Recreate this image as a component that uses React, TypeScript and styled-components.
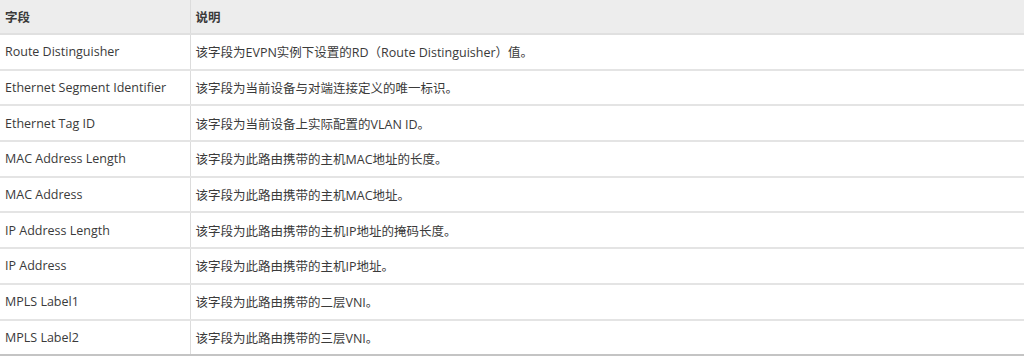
import styled, { createGlobalStyle } from 'styled-components';

const GlobalStyle = createGlobalStyle`
  html, body {
    margin: 0;
    padding: 0;
    background: #fff;
  }
`;

const Table = styled.table`
  width: 1024px;
  border-collapse: collapse;
  table-layout: fixed;
  font-family: 'Open Sans', 'Noto Sans CJK SC', sans-serif;
  font-size: 12.5px;
  color: #3a3a3a;
  border-bottom: 2px solid #c4c4c4;
`;

const HeadCell = styled.th`
  height: 33px;
  padding: 0 5px;
  text-align: left;
  font-weight: bold;
  background: #ededed;
  border-bottom: 2px solid #e0e0e0;
  & + & {
    border-left: 1px solid #dcdcdc;
  }
`;

const Row = styled.tr`
  & + & td {
    border-top: 2px solid #e4e4e4;
  }
`;

const Cell = styled.td`
  height: 33.7px;
  padding: 0 5px;
  white-space: nowrap;
  & + & {
    border-left: 1px solid #dcdcdc;
  }
`;

const rows: [string, string][] = [
  ['Route Distinguisher', '该字段为EVPN实例下设置的RD（Route Distinguisher）值。'],
  ['Ethernet Segment Identifier', '该字段为当前设备与对端连接定义的唯一标识。'],
  ['Ethernet Tag ID', '该字段为当前设备上实际配置的VLAN ID。'],
  ['MAC Address Length', '该字段为此路由携带的主机MAC地址的长度。'],
  ['MAC Address', '该字段为此路由携带的主机MAC地址。'],
  ['IP Address Length', '该字段为此路由携带的主机IP地址的掩码长度。'],
  ['IP Address', '该字段为此路由携带的主机IP地址。'],
  ['MPLS Label1', '该字段为此路由携带的二层VNI。'],
  ['MPLS Label2', '该字段为此路由携带的三层VNI。'],
];

export default function App() {
  return (
    <>
      <GlobalStyle />
      <Table>
        <colgroup>
          <col style={{ width: 190 }} />
          <col />
        </colgroup>
        <thead>
          <tr>
            <HeadCell>字段</HeadCell>
            <HeadCell>说明</HeadCell>
          </tr>
        </thead>
        <tbody>
          {rows.map(([field, desc]) => (
            <Row key={field}>
              <Cell>{field}</Cell>
              <Cell>{desc}</Cell>
            </Row>
          ))}
        </tbody>
      </Table>
    </>
  );
}
